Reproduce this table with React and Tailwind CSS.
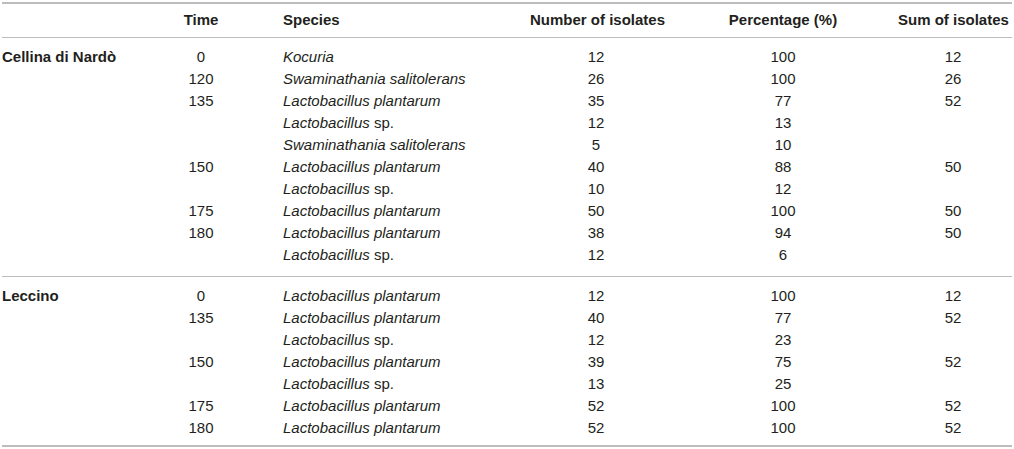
import React from 'react';

const groups = [
  {
    name: 'Cellina di Nardò',
    rows: [
      ['0', 'Kocuria', '', '12', '100', '12'],
      ['120', 'Swaminathania salitolerans', '', '26', '100', '26'],
      ['135', 'Lactobacillus plantarum', '', '35', '77', '52'],
      ['', 'Lactobacillus', ' sp.', '12', '13', ''],
      ['', 'Swaminathania salitolerans', '', '5', '10', ''],
      ['150', 'Lactobacillus plantarum', '', '40', '88', '50'],
      ['', 'Lactobacillus', ' sp.', '10', '12', ''],
      ['175', 'Lactobacillus plantarum', '', '50', '100', '50'],
      ['180', 'Lactobacillus plantarum', '', '38', '94', '50'],
      ['', 'Lactobacillus', ' sp.', '12', '6', ''],
    ],
  },
  {
    name: 'Leccino',
    rows: [
      ['0', 'Lactobacillus plantarum', '', '12', '100', '12'],
      ['135', 'Lactobacillus plantarum', '', '40', '77', '52'],
      ['', 'Lactobacillus', ' sp.', '12', '23', ''],
      ['150', 'Lactobacillus plantarum', '', '39', '75', '52'],
      ['', 'Lactobacillus', ' sp.', '13', '25', ''],
      ['175', 'Lactobacillus plantarum', '', '52', '100', '52'],
      ['180', 'Lactobacillus plantarum', '', '52', '100', '52'],
    ],
  },
];

function Group({ group, last }) {
  return (
    <tbody className={last ? 'border-b-2 border-[#bdbdbd]' : 'border-b border-[#bdbdbd]'}>
      {group.rows.map((r, i) => {
        const first = i === 0;
        const end = i === group.rows.length - 1;
        const pad = first ? 'pt-[8px]' : end ? (last ? 'pb-[6px]' : 'pb-[10px]') : '';
        return (
          <tr key={i}>
            <td className={`pl-0 font-bold align-middle ${pad}`}>{first ? group.name : ''}</td>
            <td className={`text-center h-[22px] ${pad}`}>{r[0]}</td>
            <td className={`pl-[46px] ${pad}`}>
              <span className="italic">{r[1]}</span>
              {r[2]}
            </td>
            <td className={`text-center ${pad}`}>{r[3]}</td>
            <td className={`text-center ${pad}`}>{r[4]}</td>
            <td className={`text-center pr-[10px] ${pad}`}>{r[5]}</td>
          </tr>
        );
      })}
    </tbody>
  );
}

export default function App() {
  return (
    <div className="w-[1014px] h-[449px] bg-white pt-[2px] pl-[2px] font-['Liberation_Sans',Arial,sans-serif] text-[15px] leading-[22px] text-[#231f20]">
      <table className="w-[1010px] border-collapse table-fixed">
        <colgroup>
          <col className="w-[163px]" />
          <col className="w-[72px]" />
          <col className="w-[293px]" />
          <col className="w-[132px]" />
          <col className="w-[242px]" />
          <col className="w-[108px]" />
        </colgroup>
        <thead>
          <tr className="border-t-2 border-b border-[#bdbdbd] font-bold">
            <th className="h-[34px] text-left"></th>
            <th className="text-center font-bold">Time</th>
            <th className="text-left pl-[46px] font-bold">Species</th>
            <th className="text-center font-bold whitespace-nowrap">Number of isolates</th>
            <th className="text-center font-bold">Percentage (%)</th>
            <th className="text-center font-bold whitespace-nowrap pr-[10px]">
              <span className="inline-block -mx-[6px]">Sum of isolates</span>
            </th>
          </tr>
        </thead>
        {groups.map((g, i) => (
          <Group key={g.name} group={g} last={i === groups.length - 1} />
        ))}
      </table>
    </div>
  );
}
